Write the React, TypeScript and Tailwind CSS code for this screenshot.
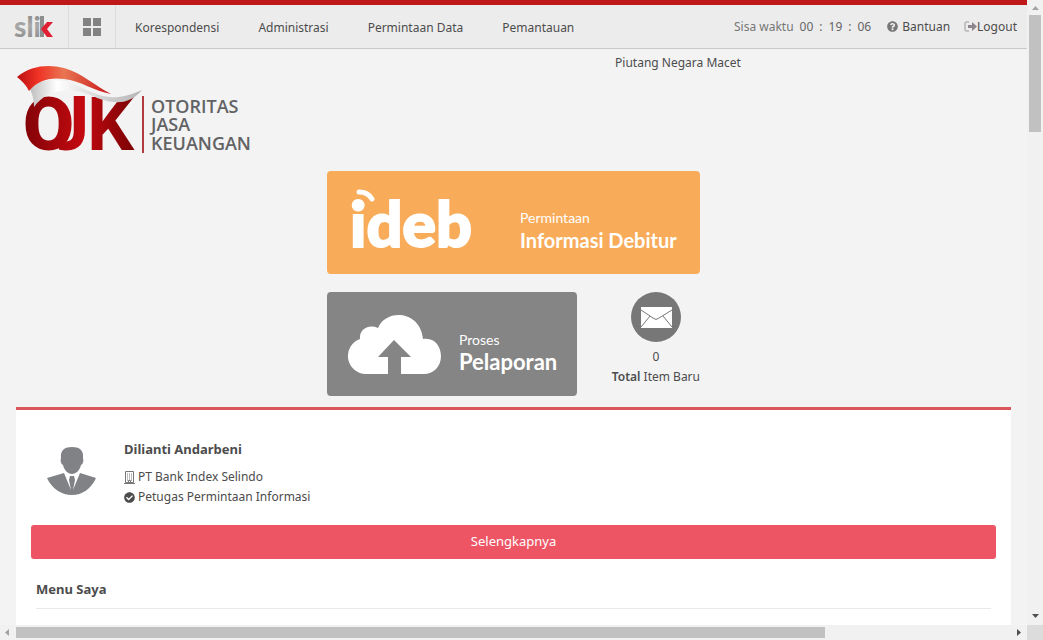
import { FaCheckCircle, FaQuestionCircle } from 'react-icons/fa';

const menus = ['Korespondensi', 'Administrasi', 'Permintaan Data', 'Pemantauan'];

function SlikLogo() {
  return (
    <svg width="42" height="26" viewBox="0 0 42 26" className="overflow-visible" role="img" aria-label="slik">
      <defs>
        <linearGradient id="slikGrey" x1="0" y1="0" x2="0" y2="1">
          <stop offset="0" stopColor="#7d7d7d" />
          <stop offset="0.5" stopColor="#aaaaaa" />
          <stop offset="1" stopColor="#858585" />
        </linearGradient>
      </defs>
      <text x="0" y="23" fontFamily="Lato, sans-serif" fontWeight="900" fontSize="28" fill="url(#slikGrey)">
        sli
      </text>
      <path d="M26 2h4v21h-4z" fill="#8d8d8d" />
      <path d="M33 8h6l-6 7 6 8h-6l-6-8z" fill="#e01f32" />
    </svg>
  );
}

function OjkLogo() {
  return (
    <svg width="242" height="96" viewBox="0 0 242 96" className="overflow-visible" role="img" aria-label="OJK Otoritas Jasa Keuangan">
      <defs>
        <linearGradient id="ojkRed" gradientUnits="userSpaceOnUse" x1="8" y1="0" x2="114" y2="0">
          <stop offset="0" stopColor="#820307" />
          <stop offset="0.55" stopColor="#c30a10" />
          <stop offset="1" stopColor="#800306" />
        </linearGradient>
        <linearGradient id="flagRed" x1="0" y1="0" x2="1" y2="0">
          <stop offset="0" stopColor="#b90f12" />
          <stop offset="0.22" stopColor="#ef3124" />
          <stop offset="0.5" stopColor="#e97552" />
          <stop offset="1" stopColor="#c8161b" />
        </linearGradient>
        <linearGradient id="flagWhite" x1="0" y1="0" x2="1" y2="0">
          <stop offset="0" stopColor="#bcbcbc" />
          <stop offset="0.25" stopColor="#ffffff" />
          <stop offset="0.65" stopColor="#d2d2d2" />
          <stop offset="1" stopColor="#b5b5b5" />
        </linearGradient>
      </defs>
      <text y="88" fontFamily="Roboto, sans-serif" fontWeight="900" fontSize="74" fill="url(#ojkRed)">
        <tspan x="7">O</tspan>
        <tspan x="42" fontFamily="Lato, sans-serif">J</tspan>
        <tspan x="71" fontWeight="700">K</tspan>
      </text>
      <path d="M13 25C30 15 47 17 62 24C82 33 96 42 126 28C110 47 91 40 74 33C51 24 29 29 18 45C18 37 16 31 13 25Z" fill="url(#flagWhite)" />
      <path d="M1 15C15 3 33 2 48 6C66 11 79 24 95 32C78 29 65 19 48 17C34 15 22 18 13 29C10 23 6 19 1 15Z" fill="url(#flagRed)" />
      <path d="M127 34v57" stroke="#b23b40" strokeWidth="2" />
      <g fontFamily="Open Sans, sans-serif" fontWeight="600" fontSize="18" fill="#626264">
        <text x="135" y="51">OTORITAS</text>
        <text x="135" y="69">JASA</text>
        <text x="135" y="88">KEUANGAN</text>
      </g>
    </svg>
  );
}

function IdebLogo() {
  return (
    <svg width="122" height="62" viewBox="0 0 122 62" className="overflow-visible" role="img" aria-label="ideb">
      <text x="-3" y="58" fontFamily="Lato, sans-serif" fontWeight="900" fontSize="63" fill="#fff" stroke="#fff" strokeWidth="2">ideb</text>
      <path d="M6 3Q15 3 19 10" fill="none" stroke="#fff" strokeWidth="5" strokeLinecap="round" />
    </svg>
  );
}

function CloudIcon() {
  return (
    <svg width="94" height="62" viewBox="0 0 94 62" aria-hidden="true">
      <path d="M19 61A18 18 0 0 1 13 26C12 16 22 11 31 15C38-4 73-4 76 26C88 24 94 34 94 43C94 54 86 61 77 61H54V44H64L47 27L31 44H41V61Z" fill="#fff" />
    </svg>
  );
}

function MailIcon() {
  return (
    <svg width="50" height="50" viewBox="0 0 50 50" aria-hidden="true">
      <circle cx="25" cy="25" r="25" fill="#777" />
      <path d="M10 15h31v21H10z" fill="#fff" />
      <path d="M10 18l12 8q3 3 6 0l13-8M10 35l9-11M41 35l-9-11" fill="none" stroke="#777" />
    </svg>
  );
}

function Avatar() {
  return (
    <svg width="50" height="50" viewBox="0 0 50 50" aria-hidden="true">
      <path d="M14 12C13 4 18 1 25 1S37 4 36 12C37 15 36 18 34 19C33 24 29 28 25 28S17 24 16 19C14 18 13 15 14 12Z" fill="#808285" />
      <path d="M0 32L17 27L24 44L22 34L23 30H27L28 34L26 44L33 27L49 32C44 43 35 49 25 49S5 43 0 32Z" fill="#808285" />
    </svg>
  );
}

function BuildingIcon() {
  return (
    <svg width="11" height="13" viewBox="0 0 11 13" aria-hidden="true" fill="none" stroke="#777">
      <path d="M1.500.500h8v11h-8zM0 12.500h11" />
      <path d="M3 3h5M3 5h5M3 7h5M3 9h5" strokeDasharray="1 1" />
      <path d="M4.500 12V9.500h2V12" />
    </svg>
  );
}

function LogoutIcon() {
  return (
    <svg width="13" height="12" viewBox="0 0 13 12" aria-hidden="true">
      <path d="M5 1H2Q1 1 1 2V9Q1 10 2 10H5" fill="none" stroke="#999" />
      <path d="M4 4H8V1L13 5.500L8 10V7H4Z" fill="#8c858c" />
    </svg>
  );
}

function Header() {
  return (
    <header className="flex h-[49px] items-stretch border-t-[5px] border-b border-t-[#be1818] border-b-[#c9c9c9] bg-[#ececec]">
      <a href="#" className="flex w-[69px] shrink-0 items-center border-r border-[#dcdcdc] pl-[14px]">
        <SlikLogo />
      </a>
      <button type="button" aria-label="Menu" className="flex w-[47px] shrink-0 items-center justify-center border-r border-[#dcdcdc]">
        <svg width="18" height="18" viewBox="0 0 18 18" fill="#828282">
          <path d="M0 0h8v8H0zM10 0h8v8h-8zM0 10h8v8H0zM10 10h8v8h-8z" />
        </svg>
      </button>
      <nav className="flex items-center gap-[39px] pt-[2px] pl-[19px] whitespace-nowrap">
        {menus.map((m) => (
          <a key={m} href="#">{m}</a>
        ))}
      </nav>
      <div className="ml-auto flex items-center pr-[10px] whitespace-nowrap">
        <span className="text-[#777]">Sisa waktu</span>
        <span className="ml-[6px] flex gap-[6px] text-[#666]">
          <span>00</span><span>:</span><span>19</span><span>:</span><span>06</span>
        </span>
        <a href="#" className="ml-4 flex items-center gap-1">
          <FaQuestionCircle className="size-[11px] text-[#777]" />
          Bantuan
        </a>
        <a href="#" className="ml-[14px] flex items-center">
          <LogoutIcon />
          Logout
        </a>
      </div>
    </header>
  );
}

function Shortcuts() {
  return (
    <div className="mx-auto w-[373px]">
      <a href="#" className="flex h-[103px] rounded-[4px] bg-[#f8ab59] pt-[18px] pl-[26px] text-white">
        <IdebLogo />
        <span className="ml-[45px] pt-[19px] font-[Lato] whitespace-nowrap">
          <span className="block text-[14px] leading-5">Permintaan</span>
          <span className="block text-[20px] leading-6 font-bold">Informasi Debitur</span>
        </span>
      </a>
      <div className="mt-[18px] flex">
        <a href="#" className="flex h-[104px] w-[250px] items-center rounded-[4px] bg-[#858585] pl-5 text-white">
          <CloudIcon />
          <span className="ml-[18px] pt-4 font-[Lato] whitespace-nowrap">
            <span className="block text-[14px] leading-5">Proses</span>
            <span className="block text-[22px] leading-6 font-bold">Pelaporan</span>
          </span>
        </a>
        <a href="#" className="flex flex-1 flex-col items-end text-center leading-5">
          <span className="flex flex-col items-center">
            <MailIcon />
            <span className="mt-[5px]">0</span>
            <span className="whitespace-nowrap"><b className="font-semibold">Total</b> Item Baru</span>
          </span>
        </a>
      </div>
    </div>
  );
}

function Profile() {
  return (
    <section className="mx-4 mt-[11px] flex-1 border-t-[3px] border-[#d9565a] bg-white px-[15px] pt-[29px]">
      <div className="flex pl-4">
        <div className="pt-[7px]"><Avatar /></div>
        <div className="ml-[27px] leading-5">
          <h2 className="text-[13px] font-bold">Dilianti Andarbeni</h2>
          <p className="mt-2 flex items-center gap-[3px]"><BuildingIcon /> PT Bank Index Selindo</p>
          <p className="flex items-center gap-[3px]"><FaCheckCircle className="size-[11px]" /> Petugas Permintaan Informasi</p>
        </div>
      </div>
      <button type="button" className="mt-[18px] block h-[34px] w-full rounded-[3px] bg-[#ed5565] text-[13px] text-white">
        Selengkapnya
      </button>
      <h3 className="mx-[5px] mt-5 border-b border-[#e7eaec] pb-[9px] text-[13px] leading-5 font-bold">Menu Saya</h3>
    </section>
  );
}

export default function App() {
  return (
    <div className="flex h-screen flex-col overflow-hidden bg-[#f3f3f4] font-['Noto_Sans',sans-serif] text-[12px] text-[#4c4c4c]">
      <div className="flex min-h-0 flex-1">
        <main className="flex min-w-0 flex-1 flex-col">
          <Header />
          <div className="grid h-[122px] shrink-0 grid-cols-12">
            <a href="#" className="col-span-7 pt-[13px] pl-4"><OjkLogo /></a>
            <p className="col-span-5 pt-1 pl-4 leading-5">Piutang Negara Macet</p>
          </div>
          <Shortcuts />
          <Profile />
        </main>
        {/* vertical scrollbar */}
        <div className="flex w-4 shrink-0 flex-col items-center bg-[#f1f1f1]">
          <svg width="15" height="15" className="shrink-0"><path d="M4 10L7.500 6L11 10Z" fill="#a3a3a3" /></svg>
          <div className="h-[117px] w-3 bg-[#c1c1c1]" />
          <svg width="15" height="15" className="mt-auto shrink-0"><path d="M4 4H11L7.500 8Z" fill="#505050" /></svg>
        </div>
      </div>
      {/* horizontal scrollbar */}
      <div className="flex h-[15px] shrink-0 items-center bg-[#f1f1f1]">
        <svg width="15" height="15" className="shrink-0"><path d="M9 4V11L5 7.500Z" fill="#a3a3a3" /></svg>
        <div className="ml-px h-[11px] w-[79%] max-w-[809px] bg-[#c1c1c1]" />
        <svg width="15" height="15" className="ml-auto shrink-0"><path d="M5 4V11L9 7.500Z" fill="#505050" /></svg>
        <div className="h-full w-4 shrink-0 bg-[#dcdcdc]" />
      </div>
    </div>
  );
}
